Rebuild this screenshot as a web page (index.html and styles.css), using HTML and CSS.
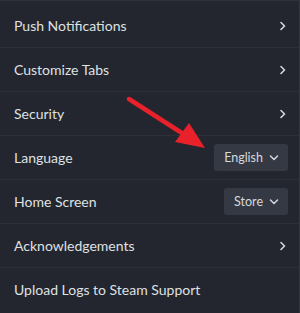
FILE: index.html
```html
<!DOCTYPE html>
<html>
<head>
<meta charset="utf-8">
<link rel="stylesheet" href="styles.css">
</head>
<body>
<div class="panel">
  <div class="row"><span class="label">Push Notifications</span><svg class="chev" width="6" height="10" viewBox="0 0 6 10"><path d="M1 1.5 L4.5 5 L1 8.5" fill="none" stroke="#d4d6dc" stroke-width="1.6" stroke-linecap="round" stroke-linejoin="round"/></svg></div>
  <div class="row"><span class="label">Customize Tabs</span><svg class="chev" width="6" height="10" viewBox="0 0 6 10"><path d="M1 1.5 L4.5 5 L1 8.5" fill="none" stroke="#d4d6dc" stroke-width="1.6" stroke-linecap="round" stroke-linejoin="round"/></svg></div>
  <div class="row"><span class="label">Security</span><svg class="chev" width="6" height="10" viewBox="0 0 6 10"><path d="M1 1.5 L4.5 5 L1 8.5" fill="none" stroke="#d4d6dc" stroke-width="1.6" stroke-linecap="round" stroke-linejoin="round"/></svg></div>
  <div class="row"><span class="label">Language</span><div class="select"><span>English</span><svg width="10" height="6" viewBox="0 0 10 6"><path d="M1.5 1 L5 4.5 L8.5 1" fill="none" stroke="#d4d6dc" stroke-width="1.5" stroke-linecap="round" stroke-linejoin="round"/></svg></div></div>
  <div class="row"><span class="label">Home Screen</span><div class="select"><span>Store</span><svg width="10" height="6" viewBox="0 0 10 6"><path d="M1.5 1 L5 4.5 L8.5 1" fill="none" stroke="#d4d6dc" stroke-width="1.5" stroke-linecap="round" stroke-linejoin="round"/></svg></div></div>
  <div class="row"><span class="label">Acknowledgements</span><svg class="chev" width="6" height="10" viewBox="0 0 6 10"><path d="M1 1.5 L4.5 5 L1 8.5" fill="none" stroke="#d4d6dc" stroke-width="1.6" stroke-linecap="round" stroke-linejoin="round"/></svg></div>
  <div class="row row-last"><span class="label">Upload Logs to Steam Support</span></div>
  <svg class="arrow" width="300" height="313" viewBox="0 0 300 313">
    <line x1="129" y1="98" x2="188" y2="136" stroke="#e8212b" stroke-width="4.5" stroke-linecap="round"/>
    <polygon points="205,147 175,141 189,122" fill="#e8212b"/>
  </svg>
</div>
</body>
</html>
```
FILE: styles.css
```css
html, body {
  margin: 0;
  padding: 0;
  background: #23262e;
}
.panel {
  position: relative;
  width: 300px;
  height: 313px;
  box-sizing: border-box;
  background: #23262e;
  border-top: 1px solid #2e313a;
  border-right: 1px solid #343742;
  padding-top: 3px;
  font-family: Lato, "Open Sans", sans-serif;
  font-size: 14px;
  color: #dfe1e4;
  overflow: hidden;
}
.row {
  height: 43px;
  border-bottom: 1px solid #2d3039;
  display: flex;
  align-items: center;
  justify-content: space-between;
  padding: 0 13px 0 14px;
}
.row-last {
  border-bottom: none;
}
.select {
  display: flex;
  align-items: center;
  gap: 6px;
  height: 27px;
  padding: 0 9px 0 10px;
  background: #353944;
  border-radius: 3px;
  margin-right: -2px;
  font-size: 12.5px;
  color: #d6d8dc;
}
.arrow {
  position: absolute;
  left: 0;
  top: 0;
  pointer-events: none;
}
```
